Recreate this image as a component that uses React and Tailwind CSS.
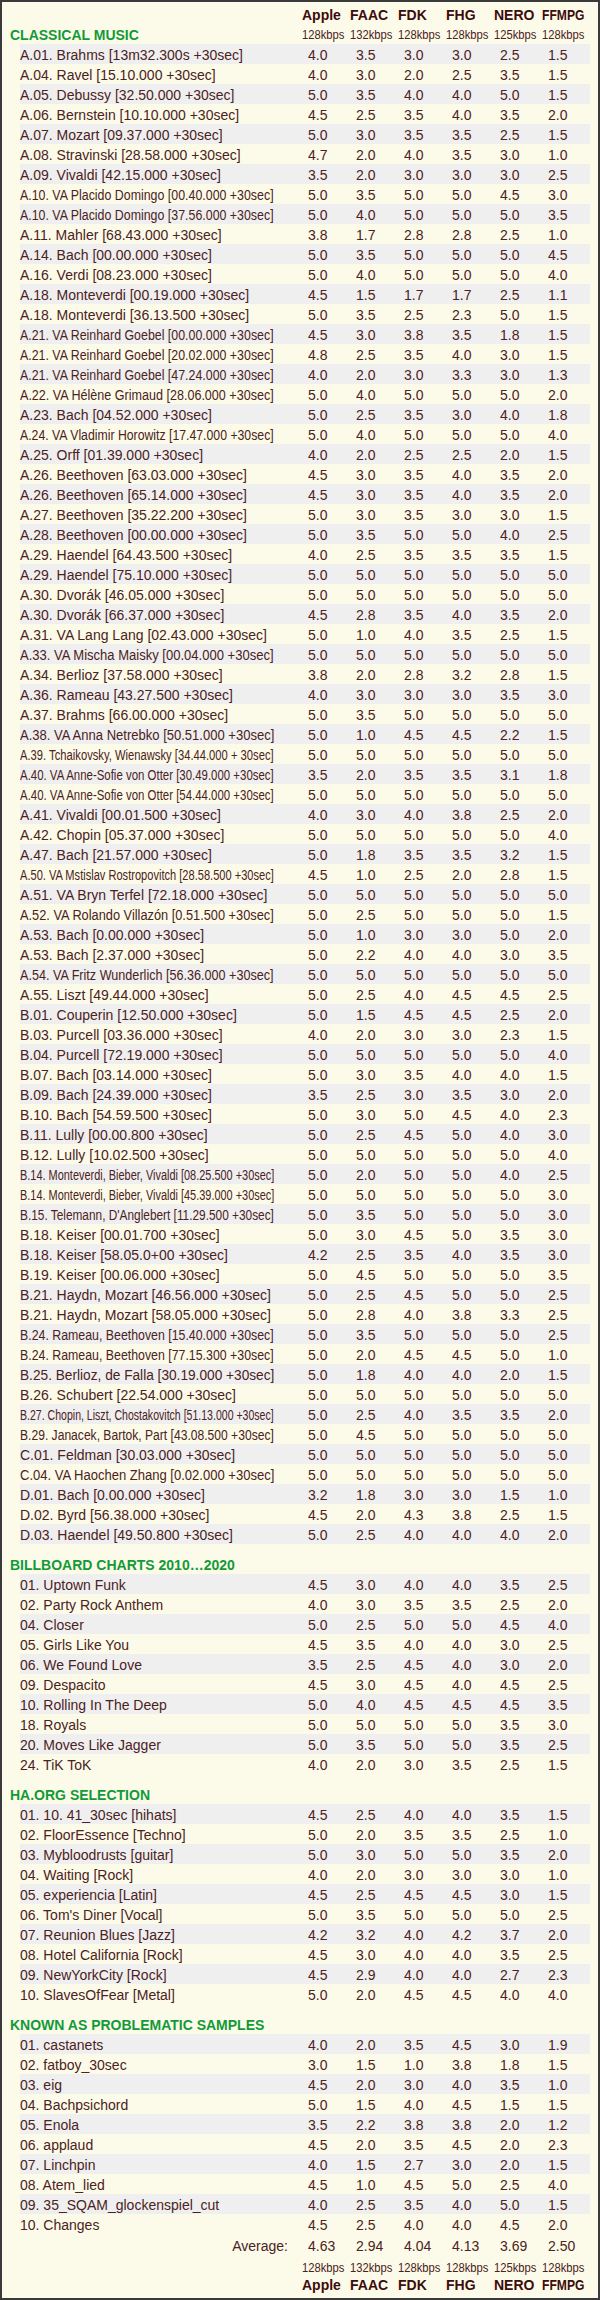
import { useLayoutEffect, useRef, useState } from 'react'

const CODECS = ['Apple', 'FAAC', 'FDK', 'FHG', 'NERO', 'FFMPG']
const RATES = ['128kbps', '132kbps', '128kbps', '128kbps', '125kbps', '128kbps']

const sections = [
  {
    title: 'CLASSICAL MUSIC',
    rows: [
      ['A.01. Brahms [13m32.300s +30sec]', '4.0 3.5 3.0 3.0 2.5 1.5'],
      ['A.04. Ravel [15.10.000 +30sec]', '4.0 3.0 2.0 2.5 3.5 1.5'],
      ['A.05. Debussy [32.50.000 +30sec]', '5.0 3.5 4.0 4.0 5.0 1.5'],
      ['A.06. Bernstein [10.10.000 +30sec]', '4.5 2.5 3.5 4.0 3.5 2.0'],
      ['A.07. Mozart [09.37.000 +30sec]', '5.0 3.0 3.5 3.5 2.5 1.5'],
      ['A.08. Stravinski [28.58.000 +30sec]', '4.7 2.0 4.0 3.5 3.0 1.0'],
      ['A.09. Vivaldi [42.15.000 +30sec]', '3.5 2.0 3.0 3.0 3.0 2.5'],
      ['A.10. VA Placido Domingo [00.40.000 +30sec]', '5.0 3.5 5.0 5.0 4.5 3.0'],
      ['A.10. VA Placido Domingo [37.56.000 +30sec]', '5.0 4.0 5.0 5.0 5.0 3.5'],
      ['A.11. Mahler [68.43.000 +30sec]', '3.8 1.7 2.8 2.8 2.5 1.0'],
      ['A.14. Bach [00.00.000 +30sec]', '5.0 3.5 5.0 5.0 5.0 4.5'],
      ['A.16. Verdi [08.23.000 +30sec]', '5.0 4.0 5.0 5.0 5.0 4.0'],
      ['A.18. Monteverdi [00.19.000 +30sec]', '4.5 1.5 1.7 1.7 2.5 1.1'],
      ['A.18. Monteverdi [36.13.500 +30sec]', '5.0 3.5 2.5 2.3 5.0 1.5'],
      ['A.21. VA Reinhard Goebel [00.00.000 +30sec]', '4.5 3.0 3.8 3.5 1.8 1.5'],
      ['A.21. VA Reinhard Goebel [20.02.000 +30sec]', '4.8 2.5 3.5 4.0 3.0 1.5'],
      ['A.21. VA Reinhard Goebel [47.24.000 +30sec]', '4.0 2.0 3.0 3.3 3.0 1.3'],
      ['A.22. VA Hélène Grimaud [28.06.000 +30sec]', '5.0 4.0 5.0 5.0 5.0 2.0'],
      ['A.23. Bach [04.52.000 +30sec]', '5.0 2.5 3.5 3.0 4.0 1.8'],
      ['A.24. VA Vladimir Horowitz [17.47.000 +30sec]', '5.0 4.0 5.0 5.0 5.0 4.0'],
      ['A.25. Orff [01.39.000 +30sec]', '4.0 2.0 2.5 2.5 2.0 1.5'],
      ['A.26. Beethoven [63.03.000 +30sec]', '4.5 3.0 3.5 4.0 3.5 2.0'],
      ['A.26. Beethoven [65.14.000 +30sec]', '4.5 3.0 3.5 4.0 3.5 2.0'],
      ['A.27. Beethoven [35.22.200 +30sec]', '5.0 3.0 3.5 3.0 3.0 1.5'],
      ['A.28. Beethoven [00.00.000 +30sec]', '5.0 3.5 5.0 5.0 4.0 2.5'],
      ['A.29. Haendel [64.43.500 +30sec]', '4.0 2.5 3.5 3.5 3.5 1.5'],
      ['A.29. Haendel [75.10.000 +30sec]', '5.0 5.0 5.0 5.0 5.0 5.0'],
      ['A.30. Dvorák [46.05.000 +30sec]', '5.0 5.0 5.0 5.0 5.0 5.0'],
      ['A.30. Dvorák [66.37.000 +30sec]', '4.5 2.8 3.5 4.0 3.5 2.0'],
      ['A.31. VA Lang Lang [02.43.000 +30sec]', '5.0 1.0 4.0 3.5 2.5 1.5'],
      ['A.33. VA Mischa Maisky [00.04.000 +30sec]', '5.0 5.0 5.0 5.0 5.0 5.0'],
      ['A.34. Berlioz [37.58.000 +30sec]', '3.8 2.0 2.8 3.2 2.8 1.5'],
      ['A.36. Rameau [43.27.500 +30sec]', '4.0 3.0 3.0 3.0 3.5 3.0'],
      ['A.37. Brahms [66.00.000 +30sec]', '5.0 3.5 5.0 5.0 5.0 5.0'],
      ['A.38. VA Anna Netrebko [50.51.000 +30sec]', '5.0 1.0 4.5 4.5 2.2 1.5'],
      ['A.39. Tchaikovsky, Wienawsky [34.44.000 + 30sec]', '5.0 5.0 5.0 5.0 5.0 5.0'],
      ['A.40. VA Anne-Sofie von Otter [30.49.000 +30sec]', '3.5 2.0 3.5 3.5 3.1 1.8'],
      ['A.40. VA Anne-Sofie von Otter [54.44.000 +30sec]', '5.0 5.0 5.0 5.0 5.0 5.0'],
      ['A.41. Vivaldi [00.01.500 +30sec]', '4.0 3.0 4.0 3.8 2.5 2.0'],
      ['A.42. Chopin [05.37.000 +30sec]', '5.0 5.0 5.0 5.0 5.0 4.0'],
      ['A.47. Bach [21.57.000 +30sec]', '5.0 1.8 3.5 3.5 3.2 1.5'],
      ['A.50. VA Mstislav Rostropovitch [28.58.500 +30sec]', '4.5 1.0 2.5 2.0 2.8 1.5'],
      ['A.51. VA Bryn Terfel [72.18.000 +30sec]', '5.0 5.0 5.0 5.0 5.0 5.0'],
      ['A.52. VA Rolando Villazón [0.51.500 +30sec]', '5.0 2.5 5.0 5.0 5.0 1.5'],
      ['A.53. Bach [0.00.000 +30sec]', '5.0 1.0 3.0 3.0 5.0 2.0'],
      ['A.53. Bach [2.37.000 +30sec]', '5.0 2.2 4.0 4.0 3.0 3.5'],
      ['A.54. VA Fritz Wunderlich [56.36.000 +30sec]', '5.0 5.0 5.0 5.0 5.0 5.0'],
      ['A.55. Liszt [49.44.000 +30sec]', '5.0 2.5 4.0 4.5 4.5 2.5'],
      ['B.01. Couperin [12.50.000 +30sec]', '5.0 1.5 4.5 4.5 2.5 2.0'],
      ['B.03. Purcell [03.36.000 +30sec]', '4.0 2.0 3.0 3.0 2.3 1.5'],
      ['B.04. Purcell [72.19.000 +30sec]', '5.0 5.0 5.0 5.0 5.0 4.0'],
      ['B.07. Bach [03.14.000 +30sec]', '5.0 3.0 3.5 4.0 4.0 1.5'],
      ['B.09. Bach [24.39.000 +30sec]', '3.5 2.5 3.0 3.5 3.0 2.0'],
      ['B.10. Bach [54.59.500 +30sec]', '5.0 3.0 5.0 4.5 4.0 2.3'],
      ['B.11. Lully [00.00.800 +30sec]', '5.0 2.5 4.5 5.0 4.0 3.0'],
      ['B.12. Lully [10.02.500 +30sec]', '5.0 5.0 5.0 5.0 5.0 4.0'],
      ['B.14. Monteverdi, Bieber, Vivaldi [08.25.500 +30sec]', '5.0 2.0 5.0 5.0 4.0 2.5'],
      ['B.14. Monteverdi, Bieber, Vivaldi [45.39.000 +30sec]', '5.0 5.0 5.0 5.0 5.0 3.0'],
      ["B.15. Telemann, D'Anglebert [11.29.500 +30sec]", '5.0 3.5 5.0 5.0 5.0 3.0'],
      ['B.18. Keiser [00.01.700 +30sec]', '5.0 3.0 4.5 5.0 3.5 3.0'],
      ['B.18. Keiser [58.05.0+00 +30sec]', '4.2 2.5 3.5 4.0 3.5 3.0'],
      ['B.19. Keiser [00.06.000 +30sec]', '5.0 4.5 5.0 5.0 5.0 3.5'],
      ['B.21. Haydn, Mozart [46.56.000 +30sec]', '5.0 2.5 4.5 5.0 5.0 2.5'],
      ['B.21. Haydn, Mozart [58.05.000 +30sec]', '5.0 2.8 4.0 3.8 3.3 2.5'],
      ['B.24. Rameau, Beethoven [15.40.000 +30sec]', '5.0 3.5 5.0 5.0 5.0 2.5'],
      ['B.24. Rameau, Beethoven [77.15.300 +30sec]', '5.0 2.0 4.5 4.5 5.0 1.0'],
      ['B.25. Berlioz, de Falla [30.19.000 +30sec]', '5.0 1.8 4.0 4.0 2.0 1.5'],
      ['B.26. Schubert [22.54.000 +30sec]', '5.0 5.0 5.0 5.0 5.0 5.0'],
      ['B.27. Chopin, Liszt, Chostakovitch [51.13.000 +30sec]', '5.0 2.5 4.0 3.5 3.5 2.0'],
      ['B.29. Janacek, Bartok, Part [43.08.500 +30sec]', '5.0 4.5 5.0 5.0 5.0 5.0'],
      ['C.01. Feldman [30.03.000 +30sec]', '5.0 5.0 5.0 5.0 5.0 5.0'],
      ['C.04. VA Haochen Zhang [0.02.000 +30sec]', '5.0 5.0 5.0 5.0 5.0 5.0'],
      ['D.01. Bach [0.00.000 +30sec]', '3.2 1.8 3.0 3.0 1.5 1.0'],
      ['D.02. Byrd [56.38.000 +30sec]', '4.5 2.0 4.3 3.8 2.5 1.5'],
      ['D.03. Haendel [49.50.800 +30sec]', '5.0 2.5 4.0 4.0 4.0 2.0'],
    ],
  },
  {
    title: 'BILLBOARD CHARTS 2010…2020',
    rows: [
      ['01. Uptown Funk', '4.5 3.0 4.0 4.0 3.5 2.5'],
      ['02. Party Rock Anthem', '4.0 3.0 3.5 3.5 2.5 2.0'],
      ['04. Closer', '5.0 2.5 5.0 5.0 4.5 4.0'],
      ['05. Girls Like You', '4.5 3.5 4.0 4.0 3.0 2.5'],
      ['06. We Found Love', '3.5 2.5 4.5 4.0 3.0 2.0'],
      ['09. Despacito', '4.5 3.0 4.5 4.0 4.5 2.5'],
      ['10. Rolling In The Deep', '5.0 4.0 4.5 4.5 4.5 3.5'],
      ['18. Royals', '5.0 5.0 5.0 5.0 3.5 3.0'],
      ['20. Moves Like Jagger', '5.0 3.5 5.0 5.0 3.5 2.5'],
      ['24. TiK ToK', '4.0 2.0 3.0 3.5 2.5 1.5'],
    ],
  },
  {
    title: 'HA.ORG SELECTION',
    rows: [
      ['01. 10. 41_30sec [hihats]', '4.5 2.5 4.0 4.0 3.5 1.5'],
      ['02. FloorEssence [Techno]', '5.0 2.0 3.5 3.5 2.5 1.0'],
      ['03. Mybloodrusts [guitar]', '5.0 3.0 5.0 5.0 3.5 2.0'],
      ['04. Waiting [Rock]', '4.0 2.0 3.0 3.0 3.0 1.0'],
      ['05. experiencia [Latin]', '4.5 2.5 4.5 4.5 3.0 1.5'],
      ["06. Tom's Diner [Vocal]", '5.0 3.5 5.0 5.0 5.0 2.5'],
      ['07. Reunion Blues [Jazz]', '4.2 3.2 4.0 4.2 3.7 2.0'],
      ['08. Hotel California [Rock]', '4.5 3.0 4.0 4.0 3.5 2.5'],
      ['09. NewYorkCity [Rock]', '4.5 2.9 4.0 4.0 2.7 2.3'],
      ['10. SlavesOfFear [Metal]', '5.0 2.0 4.5 4.5 4.0 4.0'],
    ],
  },
  {
    title: 'KNOWN AS PROBLEMATIC SAMPLES',
    rows: [
      ['01. castanets', '4.0 2.0 3.5 4.5 3.0 1.9'],
      ['02. fatboy_30sec', '3.0 1.5 1.0 3.8 1.8 1.5'],
      ['03. eig', '4.5 2.0 3.0 4.0 3.5 1.0'],
      ['04. Bachpsichord', '5.0 1.5 4.0 4.5 1.5 1.5'],
      ['05. Enola', '3.5 2.2 3.8 3.8 2.0 1.2'],
      ['06. applaud', '4.5 2.0 3.5 4.5 2.0 2.3'],
      ['07. Linchpin', '4.0 1.5 2.7 3.0 2.0 1.5'],
      ['08. Atem_lied', '4.5 1.0 4.5 5.0 2.5 4.0'],
      ['09. 35_SQAM_glockenspiel_cut', '4.0 2.5 3.5 4.0 5.0 1.5'],
      ['10. Changes', '4.5 2.5 4.0 4.0 4.5 2.0'],
    ],
  },
]

const AVERAGES = ['4.63', '2.94', '4.04', '4.13', '3.69', '2.50']

// squeezes text horizontally when it is wider than the cell allows
function Fit({ text, max, className = '' }) {
  const ref = useRef(null)
  const [scale, setScale] = useState(1)

  useLayoutEffect(() => {
    const measure = () => {
      if (!ref.current) return
      const w = ref.current.offsetWidth
      setScale(w > max ? max / w : 1)
    }
    measure()
    if (document.fonts) document.fonts.ready.then(measure)
  }, [text, max])

  return (
    <span
      ref={ref}
      className={`inline-block whitespace-nowrap origin-left ${className}`}
      style={scale < 1 ? { transform: `scaleX(${scale})` } : undefined}
    >
      {text}
    </span>
  )
}

const grid = 'grid grid-cols-[282px_repeat(6,48px)] ml-[18px] w-[570px]'

function CodecRow() {
  return (
    <div className={`${grid} h-[20px] leading-[20px]`}>
      <div />
      {CODECS.map((c) => (
        <div key={c} className="text-[14px] font-bold text-[#3d0c0c]">
          <Fit text={c} max={42.5} />
        </div>
      ))}
    </div>
  )
}

function RateCells() {
  return RATES.map((r, i) => (
    <div key={i} className="text-[12px] text-[#4a2020]">
      <Fit text={r} max={42} />
    </div>
  ))
}

function DataRow({ name, values, striped }) {
  return (
    <div className={`${grid} h-[20px] leading-[22px] text-[14px] text-[#4b2222] ${striped ? 'bg-[#efefef]' : ''}`}>
      <div className="overflow-visible">
        <Fit text={name} max={254} />
      </div>
      {values.split(' ').map((v, i) => (
        <div key={i} className="pl-[6px]">{v}</div>
      ))}
    </div>
  )
}

export default function App() {
  return (
    <div className="w-[600px] h-[2300px] box-border border-2 border-[#3a3a3a] bg-[#fcfbe9] font-['Liberation_Sans',Arial,sans-serif] overflow-hidden">
      {/* codec names */}
      <div className="pt-[3px]">
        <CodecRow />
      </div>

      {sections.map((sec, si) => (
        <div key={sec.title}>
          {si === 0 ? (
            <div className={`${grid} h-[19px] leading-[20px]`}>
              <div className="-ml-[10px] text-[14px] font-bold text-[#119a37] whitespace-nowrap">{sec.title}</div>
              <RateCells />
            </div>
          ) : (
            <div className="h-[30px] pt-[11px] pl-[8px] leading-[20px] text-[14px] font-bold text-[#119a37] whitespace-nowrap">
              {sec.title}
            </div>
          )}
          {sec.rows.map(([name, values], i) => (
            <DataRow key={i} name={name} values={values} striped={i % 2 === 0} />
          ))}
        </div>
      ))}

      {/* totals */}
      <div className={`${grid} h-[20px] leading-[24px] text-[14px] text-[#4b2222]`}>
        <div className="text-right pr-[14px]">Average:</div>
        {AVERAGES.map((a, i) => (
          <div key={i} className="pl-[6px]">{a}</div>
        ))}
      </div>
      <div className={`${grid} mt-[3px] h-[18px] leading-[22px]`}>
        <div />
        <RateCells />
      </div>
      <CodecRow />
    </div>
  )
}
